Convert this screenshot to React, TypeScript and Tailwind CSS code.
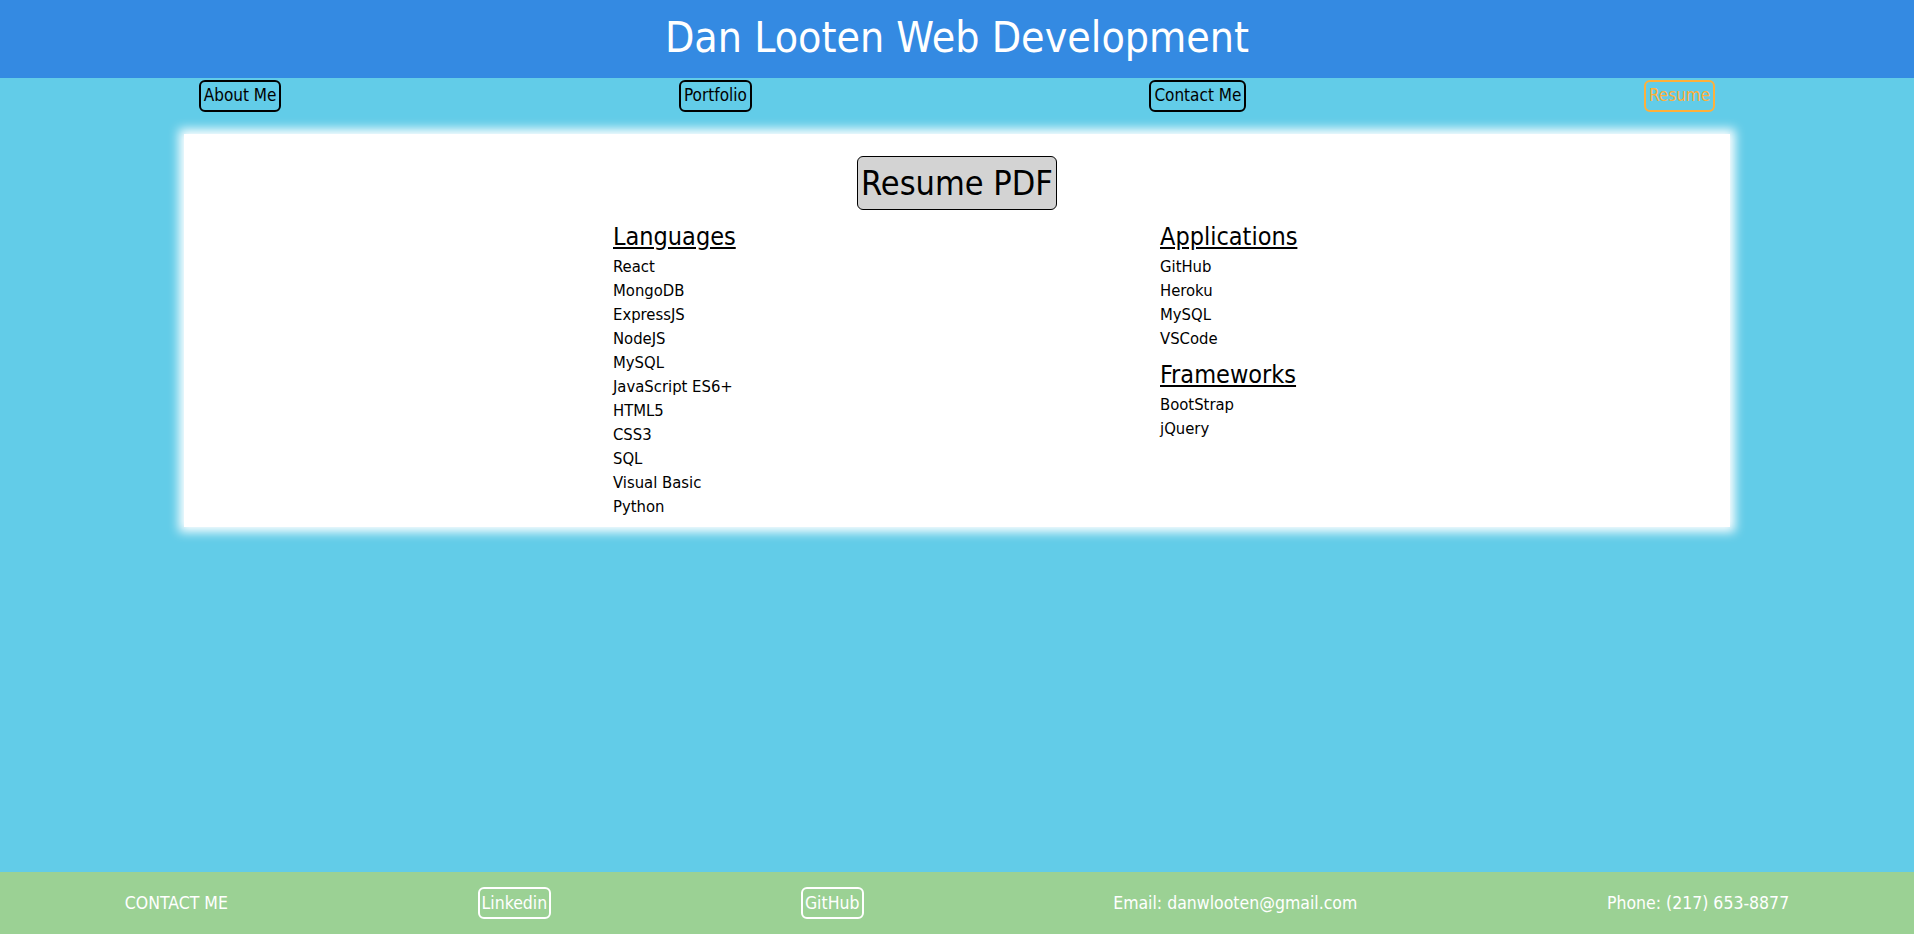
import React from "react";

const languages = [
	"React",
	"MongoDB",
	"ExpressJS",
	"NodeJS",
	"MySQL",
	"JavaScript ES6+",
	"HTML5",
	"CSS3",
	"SQL",
	"Visual Basic",
	"Python",
];
const applications = ["GitHub", "Heroku", "MySQL", "VSCode"];
const frameworks = ["BootStrap", "jQuery"];

const font = "font-['DejaVu_Sans_Condensed','DejaVu_Sans',sans-serif]";

const List = ({ items }: { items: string[] }) => (
	<ul className="text-[16.5px] leading-[24px]">
		{items.map((item) => (
			<li key={item}>{item}</li>
		))}
	</ul>
);

const App = () => {
	return (
		<div className={`min-h-screen flex flex-col bg-[#62cce8] text-black ${font}`}>
			<header className="h-[78px] bg-[#348ae2] flex items-center justify-center">
				<h1 className="text-[42.5px] text-white leading-none -mt-[2px]">Dan Looten Web Development</h1>
			</header>
			<nav className="flex justify-around items-center pt-[1px] h-[35px] text-[17px]">
				<a className="border-2 border-black rounded-md px-[3px] h-[32px] flex items-center">About Me</a>
				<a className="border-2 border-black rounded-md px-[3px] h-[32px] flex items-center">Portfolio</a>
				<a className="border-2 border-black rounded-md px-[3px] h-[32px] flex items-center">Contact Me</a>
				<a className="border-2 border-[#ffb03a] text-[#ffb03a] rounded-md px-[3px] h-[32px] flex items-center">Resume</a>
			</nav>
			<main className="flex-1 pt-[21px]">
				<section className="mx-[184px] bg-white shadow-[0_0_10px_5px_white] pt-[22px] pb-[8px]">
					<div className="flex justify-center">
						<button className="bg-[#d3d3d3] border border-black rounded-md h-[54px] px-[3px] text-[34px] leading-none">
							Resume PDF
						</button>
					</div>
					<div className="flex pl-[429px] mt-[12px]">
						<div className="w-[547px]">
							<h2 className="text-[25px] underline leading-[30px] mb-[3px]">Languages</h2>
							<List items={languages} />
						</div>
						<div>
							<h2 className="text-[25px] underline leading-[30px] mb-[3px]">Applications</h2>
							<List items={applications} />
							<h2 className="text-[25px] underline leading-[30px] mt-[9px] mb-[3px]">Frameworks</h2>
							<List items={frameworks} />
						</div>
					</div>
				</section>
			</main>
			<footer className="h-[62px] bg-[#9bd194] flex justify-around items-center text-white text-[17.5px]">
				<span>CONTACT ME</span>
				<a className="border-2 border-white rounded-md px-[2px] h-[32px] flex items-center">Linkedin</a>
				<a className="border-2 border-white rounded-md px-[2px] h-[32px] flex items-center">GitHub</a>
				<span>Email: danwlooten@gmail.com</span>
				<span>Phone: (217) 653-8877</span>
			</footer>
		</div>
	);
};

export default App;
